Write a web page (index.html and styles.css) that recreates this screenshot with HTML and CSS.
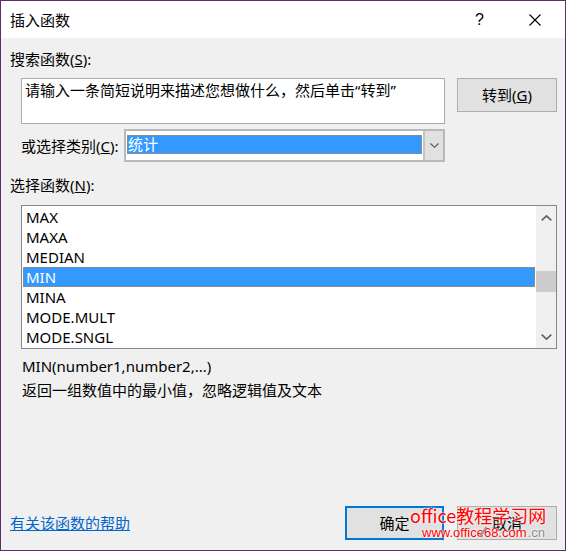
FILE: index.html
```html
<!DOCTYPE html>
<html lang="zh-CN">
<head>
<meta charset="utf-8">
<title>插入函数</title>
<link rel="stylesheet" href="styles.css">
</head>
<body>
<div class="window">
  <div class="titlebar">
    <span class="title">插入函数</span>
    <span class="tb-help">?</span>
    <svg class="tb-close" width="12" height="12" viewBox="0 0 12 12"><path d="M0.5 0.5L11.5 11.5M11.5 0.5L0.5 11.5" stroke="#000" stroke-width="1.1" fill="none"/></svg>
  </div>
  <div class="content">
    <div class="label">搜索函数(<u>S</u>):</div>
    <div class="search-row">
      <div class="textbox">请输入一条简短说明来描述您想做什么，然后单击“转到”</div>
      <button class="btn btn-go">转到(<u>G</u>)</button>
    </div>
    <div class="combo-row">
      <span class="combo-label">或选择类别(<u>C</u>):</span>
      <div class="combo">
        <div class="combo-field"><span class="combo-value">统计</span></div>
        <div class="combo-btn"><svg width="9" height="5" viewBox="0 0 9 5"><polyline points="0.5,0.5 4.5,4.3 8.5,0.5" fill="none" stroke="#555" stroke-width="1.1"/></svg></div>
      </div>
    </div>
    <div class="label label-fn">选择函数(<u>N</u>):</div>
    <div class="listbox">
      <ul class="items">
        <li>MAX</li>
        <li>MAXA</li>
        <li>MEDIAN</li>
        <li class="sel">MIN</li>
        <li>MINA</li>
        <li>MODE.MULT</li>
        <li>MODE.SNGL</li>
      </ul>
      <div class="scrollbar">
        <div class="sb-arrow"><svg width="11" height="6" viewBox="0 0 11 6"><polyline points="0.7,5.3 5.5,0.8 10.3,5.3" fill="none" stroke="#606060" stroke-width="1.6"/></svg></div>
        <div class="sb-track"><div class="sb-thumb"></div></div>
        <div class="sb-arrow"><svg width="11" height="6" viewBox="0 0 11 6"><polyline points="0.7,0.7 5.5,5.2 10.3,0.7" fill="none" stroke="#606060" stroke-width="1.6"/></svg></div>
      </div>
    </div>
    <div class="desc">
      <div>MIN(number1,number2,...)</div>
      <div>返回一组数值中的最小值，忽略逻辑值及文本</div>
    </div>
    <div class="footer">
      <a class="help" href="#">有关该函数的帮助</a>
      <div class="actions">
        <button class="btn btn-ok">确定</button>
        <button class="btn btn-cancel">取消</button>
      </div>
      <div class="watermark">
        <div class="wm-title">office教程学习网</div>
        <div class="wm-url">www.office68.com<span class="wm-cn">.cn</span></div>
        <span class="wm-mark"></span>
      </div>
    </div>
  </div>
</div>
</body>
</html>
```
FILE: styles.css
```css
* { box-sizing: border-box; }
html, body { margin: 0; padding: 0; background: #fff; }
body {
  font-family: "Noto Sans", "Noto Sans CJK SC", sans-serif;
  font-size: 15px;
  color: #000;
}
.window {
  width: 566px;
  height: 551px;
  border: 1px solid #5b2c6f;
  background: #f0f0f0;
  display: flex;
  flex-direction: column;
}
.titlebar {
  flex: none;
  height: 37px;
  background: #fff;
  display: flex;
  align-items: center;
  padding: 0 24px 0 9px;
}
.title { flex: 1; line-height: 20px; }
.tb-help { width: 7px; font-size: 16px; line-height: 20px; font-family: "Liberation Sans", sans-serif; }
.tb-close { margin-left: 47px; }
.content {
  flex: 1;
  display: flex;
  flex-direction: column;
  padding: 11px 8px 10px 9px;
}
.label { height: 20px; line-height: 20px; }
.search-row {
  margin-top: 9px;
  margin-left: 11px;
  display: flex;
  align-items: flex-start;
  gap: 12px;
}
.textbox {
  width: 424px;
  height: 46px;
  background: #fff;
  border: 1px solid #ababab;
  padding: 1px 3px;
  line-height: 20px;
  white-space: nowrap;
}
.btn {
  font: inherit;
  color: #000;
  background: #e1e1e1;
  border: 1px solid #adadad;
  width: 100px;
  height: 34px;
  padding: 0;
  line-height: 20px;
}
.combo-row {
  margin-top: 5px;
  margin-left: 11px;
  display: flex;
  align-items: center;
}
.combo-label { width: 103px; line-height: 20px; }
.combo {
  width: 321px;
  height: 33px;
  border: 2px solid #b9b9b9;
  background: #fff;
  display: flex;
}
.combo-field { flex: 1; padding: 4px 1px 0 1px; }
.combo-value {
  display: block;
  height: 19px;
  line-height: 19px;
  background: #3399ff;
  color: #fff;
  padding-left: 1px;
  outline: 1px dotted #c9843e;
  outline-offset: -1px;
}
.combo-btn {
  width: 20px;
  border-left: 2px solid #c4c4c4;
  background: #e1e1e1;
  display: flex;
  align-items: center;
  justify-content: center;
}
.label-fn { margin-top: 13px; }
.listbox {
  margin-top: 10px;
  margin-left: 11px;
  width: 536px;
  height: 144px;
  border: 1px solid #828790;
  background: #fff;
  display: flex;
}
.items {
  list-style: none;
  margin: 0;
  padding: 1px;
  flex: 1;
}
.items li { height: 20px; line-height: 20px; padding-left: 3px; }
.items li.sel {
  background: #3399ff;
  color: #fff;
  outline: 1px dotted #c9843e;
  outline-offset: -1px;
}
.scrollbar {
  width: 20px;
  background: #f0f0f0;
  display: flex;
  flex-direction: column;
}
.sb-arrow {
  height: 23px;
  display: flex;
  align-items: center;
  justify-content: center;
}
.sb-track { flex: 1; }
.sb-thumb { margin-top: 42px; height: 21px; background: #cdcdcd; }
.desc { margin-top: 5px; line-height: 24px; padding-left: 12px; }
.footer {
  margin-top: auto;
  height: 34px;
  display: flex;
  align-items: center;
  position: relative;
}
.help { color: #0066cc; text-decoration: underline; line-height: 20px; }
.actions { margin-left: auto; display: flex; gap: 13px; }
.btn-ok { width: 99px; border: 2px solid #0078d7; }
.watermark {
  position: absolute;
  left: 400px;
  top: -2px;
  color: #ff0000;
  text-shadow: 0 0 2px #fff, 0 0 2px #fff;
  pointer-events: none;
}
.wm-title { font-family: "Noto Sans CJK SC", sans-serif; font-size: 18px; line-height: 22px; }
.wm-url {
  margin-left: 12px;
  font-family: "Liberation Sans", sans-serif;
  font-size: 13px;
  line-height: 14px;
}
.wm-cn { color: #8a8a8a; margin-left: 1px; }
.wm-mark {
  position: absolute;
  left: 72px;
  top: 22px;
  width: 2px;
  height: 12px;
  background: #9a9a9a;
  transform: rotate(35deg);
}
```
